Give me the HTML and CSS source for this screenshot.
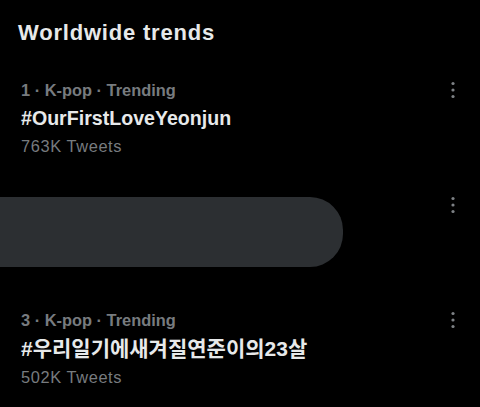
FILE: index.html
```html
<!DOCTYPE html>
<html lang="en">
<head>
<meta charset="utf-8">
<title>Worldwide trends</title>
<link rel="stylesheet" href="styles.css">
</head>
<body>
<section class="panel">
  <h2 class="heading">Worldwide trends</h2>

  <div class="trend">
    <div class="trend-body">
      <div class="meta">1 · K-pop · Trending</div>
      <div class="title">#OurFirstLoveYeonjun</div>
      <div class="count">763K Tweets</div>
    </div>
    <div class="more" aria-label="More">
      <svg width="14" height="20" viewBox="0 0 14 20"><circle cx="7" cy="3.5" r="1.6"/><circle cx="7" cy="10" r="1.6"/><circle cx="7" cy="16.5" r="1.6"/></svg>
    </div>
  </div>

  <div class="trend">
    <div class="trend-body redacted-body">
      <div class="redacted"></div>
    </div>
    <div class="more" aria-label="More">
      <svg width="14" height="20" viewBox="0 0 14 20"><circle cx="7" cy="3.5" r="1.6"/><circle cx="7" cy="10" r="1.6"/><circle cx="7" cy="16.5" r="1.6"/></svg>
    </div>
  </div>

  <div class="trend">
    <div class="trend-body">
      <div class="meta">3 · K-pop · Trending</div>
      <div class="title title-ko">#우리일기에새겨질연준이의23살</div>
      <div class="count">502K Tweets</div>
    </div>
    <div class="more" aria-label="More">
      <svg width="14" height="20" viewBox="0 0 14 20"><circle cx="7" cy="3.5" r="1.6"/><circle cx="7" cy="10" r="1.6"/><circle cx="7" cy="16.5" r="1.6"/></svg>
    </div>
  </div>
</section>
</body>
</html>
```

FILE: styles.css
```css
html, body {
  margin: 0;
  padding: 0;
  background: #000;
}

body {
  width: 480px;
  height: 407px;
  overflow: hidden;
  font-family: "Liberation Sans", Arial, "Noto Sans CJK KR", sans-serif;
  color: #e7e9ea;
}

.panel {
  display: flex;
  flex-direction: column;
}

.heading {
  margin: 0 0 14px 0;
  padding: 19px 0 0 18px;
  font-size: 22px;
  line-height: 28px;
  font-weight: 700;
  letter-spacing: 0.8px;
  color: #e7e9ea;
}

.trend {
  display: flex;
  align-items: flex-start;
  padding: 16px 20px 17px 0;
}

.trend-body {
  flex: 1;
  min-height: 82px;
  padding-left: 21px;
  display: flex;
  flex-direction: column;
}

.redacted-body {
  padding-left: 0;
}

.meta {
  font-size: 16.4px;
  line-height: 26px;
  font-weight: 700;
  color: #777b7f;
}

.title {
  font-size: 19.6px;
  line-height: 30px;
  font-weight: 700;
  color: #e7e9ea;
}

.title-ko {
  font-family: "Liberation Sans", "Noto Sans CJK KR", sans-serif;
  font-size: 21px;
  line-height: 31px;
}

.count {
  font-size: 16.4px;
  line-height: 26px;
  letter-spacing: 0.6px;
  color: #777b7f;
}

.redacted {
  margin-top: 5px;
  width: 343px;
  height: 70px;
  background: #2c2f32;
  border-radius: 0 33px 33px 0;
}

.more {
  width: 14px;
  height: 26px;
  display: flex;
  align-items: center;
  justify-content: center;
  fill: #7d8185;
}
```
